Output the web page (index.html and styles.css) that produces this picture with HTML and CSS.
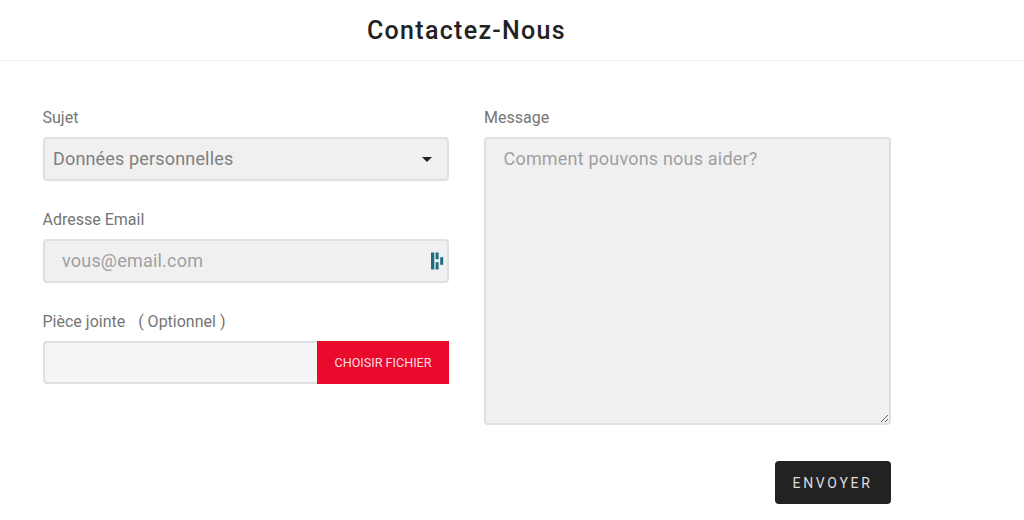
FILE: index.html
```html
<!DOCTYPE html>
<html lang="fr">
<head>
  <meta charset="UTF-8">
  <meta name="viewport" content="width=device-width, initial-scale=1.0">
  <title>Contactez-Nous</title>
  <link rel="stylesheet" href="styles.css">
</head>
<body>
  <header class="header">
    <h1>Contactez-Nous</h1>
  </header>

  <form class="contact-form">
    <div class="col">
      <div class="form-group">
        <label for="sujet">Sujet</label>
        <div class="field select-field">
          <span>Données personnelles</span>
          <i class="caret"></i>
        </div>
      </div>

      <div class="form-group">
        <label for="email">Adresse Email</label>
        <div class="field email-field">
          <input type="text" id="email" placeholder="vous@email.com">
          <svg class="pass-icon" width="13" height="18" viewBox="0 0 13 18">
            <rect x="0" y="0.5" width="3.3" height="17" fill="#1f6c7d"/>
            <rect x="4.6" y="0.5" width="3" height="6.7" fill="#1f6c7d"/>
            <rect x="4.6" y="10.2" width="3" height="7.3" fill="#1f6c7d"/>
            <rect x="9.2" y="5.2" width="3" height="7.6" fill="#1f6c7d"/>
          </svg>
        </div>
      </div>

      <div class="form-group">
        <label>Pièce jointe <span class="optional">( Optionnel )</span></label>
        <div class="file-row">
          <div class="file-name"></div>
          <button type="button" class="file-btn">CHOISIR FICHIER</button>
        </div>
      </div>
    </div>

    <div class="col">
      <div class="form-group">
        <label for="message">Message</label>
        <textarea id="message" placeholder="Comment pouvons nous aider?"></textarea>
      </div>
      <div class="actions">
        <button type="button" class="send-btn">ENVOYER</button>
      </div>
    </div>
  </form>
</body>
</html>
```

FILE: styles.css
```css
* {
  margin: 0;
  padding: 0;
  box-sizing: border-box;
  font-family: Roboto, "Liberation Sans", sans-serif;
}

body {
  background-color: white;
  overflow: hidden;
}

.header {
  height: 61px;
  border-bottom: 1px solid #eeeeee;
  padding: 16px 0 0 367px;
}

h1 {
  font-size: 25px;
  line-height: 30px;
  font-weight: 500;
  letter-spacing: 1.3px;
  color: #222;
}

.contact-form {
  display: flex;
  gap: 35px;
  padding: 46px 0 0 42.5px;
}

.col {
  width: 406.5px;
}

.form-group {
  margin-bottom: 28px;
}

label {
  display: block;
  font-size: 16px;
  line-height: 22px;
  margin-bottom: 8px;
  color: #757575;
}

.optional {
  margin-left: 9px;
}

.field {
  height: 44px;
  display: flex;
  align-items: center;
  background-color: #f0f0f0;
  border: 2px solid #e0e0e0;
  border-radius: 4px;
}

.select-field {
  justify-content: space-between;
  padding: 0 15px 2px 8.5px;
  font-size: 18px;
  letter-spacing: 0.16px;
  color: #808080;
}

.caret {
  width: 0;
  height: 0;
  margin-top: 2px;
  border-left: 5px solid transparent;
  border-right: 5px solid transparent;
  border-top: 5px solid #222;
}

.email-field {
  padding: 0 3px 2px 17.5px;
}

.email-field input {
  flex: 1;
  min-width: 0;
  border: none;
  outline: none;
  background: transparent;
  font-size: 18px;
  letter-spacing: 0.2px;
}

input::placeholder,
textarea::placeholder {
  color: #a0a0a0;
  opacity: 1;
}

.pass-icon {
  display: block;
  margin-top: 1px;
}

.file-row {
  display: flex;
  height: 43px;
}

.file-name {
  flex: 1;
  background-color: #f5f5f5;
  border: 2px solid #e0e0e0;
  border-right: none;
  border-radius: 4px 0 0 4px;
}

.file-btn {
  width: 132px;
  border: none;
  background-color: #e90a2c;
  color: #fbdde2;
  font-size: 12.6px;
}

textarea {
  display: block;
  width: 100%;
  height: 288px;
  padding: 8px 17.5px;
  background-color: #f0f0f0;
  border: 2px solid #e0e0e0;
  border-radius: 4px;
  font-size: 18px;
  letter-spacing: 0.2px;
  line-height: 24px;
  outline: none;
}

.actions {
  display: flex;
  justify-content: flex-end;
  margin-top: -9px;
  padding-top: 17px;
}

.send-btn {
  width: 116px;
  height: 43px;
  padding-top: 1px;
  border: none;
  border-radius: 4px;
  background-color: #222;
  color: #ddd;
  font-size: 14px;
  letter-spacing: 2.7px;
}
```
